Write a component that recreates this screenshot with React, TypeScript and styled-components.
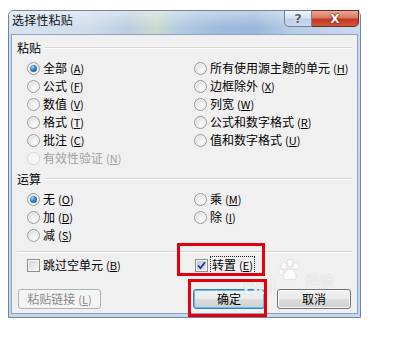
import React from 'react';
import styled, { createGlobalStyle, css } from 'styled-components';

const GlobalStyle = createGlobalStyle`
  html, body { margin: 0; padding: 0; background: #ffffff; }
  body {
    font-family: "Noto Sans CJK SC", "Noto Sans", "Liberation Sans", sans-serif;
    font-size: 12px;
    color: #000;
  }
  * { box-sizing: border-box; }
`;

const Page = styled.div`
  position: relative;
  width: 407px;
  height: 340px;
  padding: 10px 0 0 8px;
  overflow: hidden;
`;

const Window = styled.div`
  position: relative;
  width: 353px;
  height: 308px;
  border: 1px solid #71849b;
  border-radius: 6px 6px 0 0;
  background: linear-gradient(180deg, #c9dbef 0%, #c3d7ed 100%);
  display: flex;
  flex-direction: column;
`;

const TitleBar = styled.div`
  height: 23px;
  display: flex;
  justify-content: space-between;
  align-items: flex-start;
  border-radius: 5px 5px 0 0;
  background:
    linear-gradient(180deg, rgba(255, 255, 255, 0.4) 0%, rgba(255, 255, 255, 0) 70%),
    linear-gradient(90deg, #d6e3f1 0%, #d0ddec 22%, #bccfe4 34%, #c9dacb 42%, #b4cbe2 48%, #9fbbdc 60%, #9ab6d9 70%, #b6cce6 80%, #c7d9ed 100%);
`;

const Title = styled.div`
  padding: 0 0 0 3px;
  line-height: 17px;
  font-size: 12px;
  color: #111;
  letter-spacing: 0.2px;
`;

const CaptionGroup = styled.div`
  display: flex;
  margin: -1px 1px 0 0;
`;

const CaptionButton = styled.div<{ $close?: boolean }>`
  height: 17px;
  display: flex;
  align-items: center;
  justify-content: center;
  font-family: "DejaVu Sans", sans-serif;
  font-weight: bold;
  ${(p) =>
    p.$close
      ? css`
          width: 47px;
          border: 1px solid #6e2b20;
          border-left: none;
          border-radius: 0 0 5px 0;
          background: linear-gradient(180deg, #e9a996 0%, #d97a63 45%, #c4381f 55%, #d4553a 100%);
          color: #fff;
          font-size: 12px;
          text-shadow: 0 0 2px #5a1408, 0 0 1px #5a1408;
        `
      : css`
          width: 28px;
          border: 1px solid #6f8096;
          border-radius: 0 0 0 5px;
          background: linear-gradient(180deg, #eef3f9 0%, #d7e2ef 45%, #bccfe4 55%, #c9daec 100%);
          color: #52647a;
          font-size: 13px;
          text-shadow: 0 0 2px #fff, 0 0 1px #fff;
        `}
`;

const Client = styled.div`
  flex: 1;
  margin: 0 2px 3px 2px;
  background: #f0f0f0;
  border: 1px solid #8ea3bd;
  display: flex;
  flex-direction: column;
  padding-top: 4px;
`;

const GroupHeader = styled.div<{ $top?: number }>`
  height: 18px;
  display: flex;
  align-items: center;
  gap: 4px;
  padding: 0 5px;
  margin-top: ${(p) => p.$top ?? 0}px;
  margin-bottom: 2px;
  line-height: 18px;
`;

const Rule = styled.div`
  flex: 1;
  height: 2px;
  border-top: 1px solid #d5d5d5;
  border-bottom: 1px solid #ffffff;
`;

const OptionGrid = styled.div<{ $rows: number }>`
  display: grid;
  grid-template-columns: 167px 1fr;
  grid-template-rows: repeat(${(p) => p.$rows}, 18px);
  grid-auto-flow: column;
  padding-left: 15px;
`;

const Option = styled.label<{ $disabled?: boolean }>`
  display: flex;
  align-items: center;
  gap: 3px;
  height: 18px;
  line-height: 18px;
  white-space: nowrap;
  color: ${(p) => (p.$disabled ? '#a0a0a0' : '#000')};
`;

const RadioCircle = styled.span<{ $checked?: boolean; $disabled?: boolean }>`
  flex: none;
  width: 13px;
  height: 13px;
  border-radius: 50%;
  border: 1px solid ${(p) => (p.$disabled ? '#d4d4d4' : '#9c9c9c')};
  background: ${(p) =>
    p.$disabled
      ? '#f5f5f5'
      : 'radial-gradient(circle at 65% 70%, #ffffff 0%, #eeeeee 40%, #d2d2d2 100%)'};
  box-shadow: inset 0 0 0 1px ${(p) => (p.$disabled ? '#f8f8f8' : '#f2f2f2')};
  display: flex;
  align-items: center;
  justify-content: center;
  ${(p) =>
    p.$checked &&
    css`
      &::after {
        content: '';
        width: 7px;
        height: 7px;
        border-radius: 50%;
        background: radial-gradient(circle at 35% 30%, #a7d6f7 0%, #3a86c4 40%, #134774 100%);
      }
    `}
`;

const Accel = styled.span`
  margin-left: 3px;
  font-size: 11px;
  & u { text-decoration: underline; text-underline-offset: 1px; }
`;

const Separator = styled.div`
  margin: 7px 5px 0 5px;
  height: 2px;
  border-top: 1px solid #d5d5d5;
  border-bottom: 1px solid #ffffff;
`;

const CheckRow = styled.div`
  display: grid;
  grid-template-columns: 168px 1fr;
  height: 18px;
  margin-top: 3px;
  padding-left: 15px;
`;

const CheckBoxBox = styled.span<{ $checked?: boolean }>`
  flex: none;
  width: 13px;
  height: 13px;
  border: 1px solid #8e8f8f;
  box-shadow: inset 0 0 0 1px #f4f4f4;
  background: ${(p) =>
    p.$checked
      ? 'linear-gradient(135deg, #b9c6dd 0%, #e4eaf3 100%)'
      : 'linear-gradient(135deg, #d4d4d4 0%, #f7f7f7 100%)'};
  display: flex;
  align-items: center;
  justify-content: center;
`;

const FocusText = styled.span`
  outline: 1px dotted #222;
  outline-offset: 0;
  padding: 0 1px;
  line-height: 15px;
`;

const ButtonRow = styled.div`
  display: flex;
  justify-content: space-between;
  margin-top: 15px;
  padding: 0 6px;
`;

const ButtonGroup = styled.div`
  display: flex;
  gap: 12px;
`;

const Button = styled.div<{ $w: number; $variant?: 'default' | 'disabled' }>`
  width: ${(p) => p.$w}px;
  height: 20px;
  border-radius: 3px;
  display: flex;
  align-items: center;
  justify-content: center;
  line-height: 18px;
  border: 1px solid #707070;
  color: #000;
  background: linear-gradient(180deg, #f2f2f2 0%, #ebebeb 48%, #dddddd 52%, #cfcfcf 100%);
  box-shadow: inset 0 0 0 1px #fbfbfb;
  ${(p) =>
    p.$variant === 'default' &&
    css`
      border-color: #3c7fb1;
      box-shadow: inset 0 0 0 1px #59c4ef;
    `}
  ${(p) =>
    p.$variant === 'disabled' &&
    css`
      border-color: #adb2b5;
      background: #f4f4f4;
      box-shadow: none;
      color: #8a8a8a;
    `}
`;

const Annotation = styled.div<{ $x: number; $y: number; $w: number; $h: number }>`
  position: absolute;
  left: ${(p) => p.$x}px;
  top: ${(p) => p.$y}px;
  width: ${(p) => p.$w}px;
  height: ${(p) => p.$h}px;
  border: 3px solid #e3000f;
  pointer-events: none;
`;

const Watermark = styled.div`
  position: absolute;
  left: 243px;
  top: 258px;
  height: 40px;
  display: flex;
  align-items: flex-end;
  gap: 1px;
  pointer-events: none;
  color: rgba(255, 255, 255, 0.8);
  text-shadow: 0 0 1px rgba(120, 120, 120, 0.4);
`;

const WmBai = styled.span`
  font-family: "Liberation Sans", sans-serif;
  font-weight: bold;
  font-size: 21px;
  line-height: 22px;
`;

const WmJy = styled.span`
  font-size: 14px;
  line-height: 16px;
  margin: 0 0 10px 2px;
`;

type Opt = { label: string; key: string; checked?: boolean; disabled?: boolean };

const pasteLeft: Opt[] = [
  { label: '全部', key: 'A', checked: true },
  { label: '公式', key: 'F' },
  { label: '数值', key: 'V' },
  { label: '格式', key: 'T' },
  { label: '批注', key: 'C' },
  { label: '有效性验证', key: 'N', disabled: true },
];
const pasteRight: Opt[] = [
  { label: '所有使用源主题的单元', key: 'H' },
  { label: '边框除外', key: 'X' },
  { label: '列宽', key: 'W' },
  { label: '公式和数字格式', key: 'R' },
  { label: '值和数字格式', key: 'U' },
];
const opLeft: Opt[] = [
  { label: '无', key: 'O', checked: true },
  { label: '加', key: 'D' },
  { label: '减', key: 'S' },
];
const opRight: Opt[] = [
  { label: '乘', key: 'M' },
  { label: '除', key: 'I' },
];

const AccelText = ({ k }: { k: string }) => (
  <Accel>
    (<u>{k}</u>)
  </Accel>
);

const RadioOption = ({ o }: { o: Opt }) => (
  <Option $disabled={o.disabled}>
    <RadioCircle $checked={o.checked} $disabled={o.disabled} />
    <span>
      {o.label}
      <AccelText k={o.key} />
    </span>
  </Option>
);

const CheckMark = () => (
  <svg width="9" height="9" viewBox="0 0 9 9">
    <path d="M1 4.5 L3.5 7.2 L8 1.2" fill="none" stroke="#1d3a7c" strokeWidth="1.8" />
  </svg>
);

const Paw = () => (
  <svg width="26" height="26" viewBox="0 0 26 26" style={{ marginBottom: 14, flex: 'none' }}>
    <g fill="rgba(255,255,255,0.8)" stroke="rgba(140,140,140,0.3)" strokeWidth="0.6">
      <ellipse cx="7" cy="8" rx="3" ry="3.6" />
      <ellipse cx="13" cy="5" rx="3" ry="3.6" />
      <ellipse cx="19" cy="8" rx="3" ry="3.6" />
      <ellipse cx="4" cy="14" rx="2.6" ry="3" />
      <path d="M13 11 C9 11 6 17 7 20 C8 23 11 21 13 21 C15 21 18 23 19 20 C20 17 17 11 13 11 Z" />
    </g>
  </svg>
);

export default function App() {
  return (
    <>
      <GlobalStyle />
      <Page>
        <Window>
          <TitleBar>
            <Title>选择性粘贴</Title>
            <CaptionGroup>
              <CaptionButton>?</CaptionButton>
              <CaptionButton $close>X</CaptionButton>
            </CaptionGroup>
          </TitleBar>
          <Client>
            <GroupHeader>
              <span>粘贴</span>
              <Rule />
            </GroupHeader>
            <OptionGrid $rows={6}>
              {pasteLeft.map((o) => (
                <RadioOption key={o.key} o={o} />
              ))}
              {pasteRight.map((o) => (
                <RadioOption key={o.key} o={o} />
              ))}
            </OptionGrid>
            <GroupHeader $top={3}>
              <span>运算</span>
              <Rule />
            </GroupHeader>
            <OptionGrid $rows={3}>
              {opLeft.map((o) => (
                <RadioOption key={o.key} o={o} />
              ))}
              {opRight.map((o) => (
                <RadioOption key={o.key} o={o} />
              ))}
            </OptionGrid>
            <Separator />
            <CheckRow>
              <Option>
                <CheckBoxBox />
                <span>
                  跳过空单元
                  <AccelText k="B" />
                </span>
              </Option>
              <Option>
                <CheckBoxBox $checked>
                  <CheckMark />
                </CheckBoxBox>
                <FocusText>
                  转置
                  <AccelText k="E" />
                </FocusText>
              </Option>
            </CheckRow>
            <ButtonRow>
              <Button $w={83} $variant="disabled">
                粘贴链接
                <AccelText k="L" />
              </Button>
              <ButtonGroup>
                <Button $w={72} $variant="default">
                  确定
                </Button>
                <Button $w={74}>取消</Button>
              </ButtonGroup>
            </ButtonRow>
          </Client>
        </Window>
        <Watermark aria-hidden="true">
          <WmBai>Bai</WmBai>
          <Paw />
          <WmJy>经验</WmJy>
        </Watermark>
        <Annotation $x={177} $y={243} $w={88} $h={33} />
        <Annotation $x={188} $y={279} $w={79} $h={38} />
      </Page>
    </>
  );
}
